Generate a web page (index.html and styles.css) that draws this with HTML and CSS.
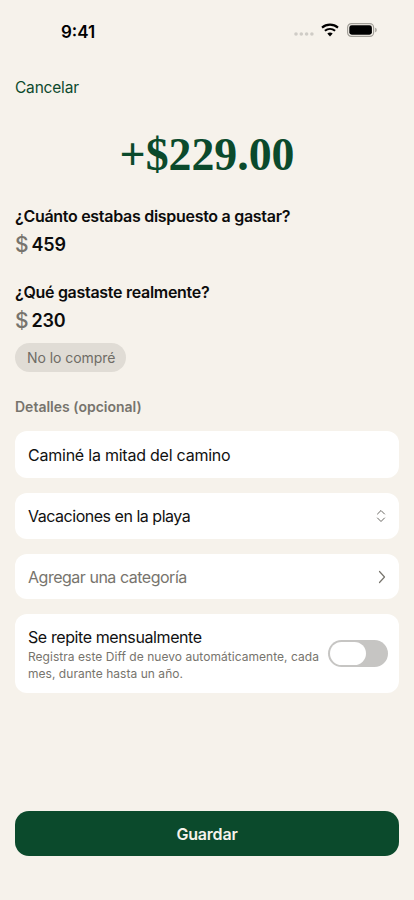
FILE: index.html
```html
<!DOCTYPE html>
<html lang="es">
<head>
<meta charset="utf-8">
<title>Diff</title>
<link rel="stylesheet" href="styles.css">
</head>
<body>
<div class="page">
  <header class="status">
    <span class="time">9:41</span>
    <div class="status-icons">
      <svg class="dots" width="20" height="4" viewBox="0 0 20 4"><g fill="#cfccc6"><circle cx="2" cy="2" r="1.8"/><circle cx="7.3" cy="2" r="1.8"/><circle cx="12.6" cy="2" r="1.8"/><circle cx="17.9" cy="2" r="1.8"/></g></svg>
      <svg class="wifi" width="18" height="14" viewBox="0 0 18 14"><g fill="none" stroke="#000" stroke-width="2.1"><path d="M1 4.6C5.6.6 12.4.6 17 4.6"/><path d="M3.9 7.8c3-2.500 7.200-2.500 10.200 0"/></g><path d="M6.300 10.500c1.600-1.200 3.800-1.200 5.400 0L9 13.600z" fill="#000"/></svg>
      <svg class="battery" width="30" height="14" viewBox="0 0 30 14"><rect x=".6" y=".6" width="26" height="12.8" rx="3.8" fill="none" stroke="#a29f98" stroke-width="1.2"/><rect x="2.3" y="2.3" width="22.6" height="9.4" rx="2.4" fill="#000"/><path d="M28.200 4.800c1 .3 1.500 1.100 1.500 2.200s-.5 1.900-1.500 2.200z" fill="#a29f98"/></svg>
    </div>
  </header>

  <main class="content">
    <a class="cancel">Cancelar</a>
    <h1 class="total">+$229.00</h1>

    <section class="question">
      <h2 class="q-label">¿Cuánto estabas dispuesto a gastar?</h2>
      <div class="amount"><span class="currency">$</span><span class="value">459</span></div>
    </section>

    <section class="question second">
      <h2 class="q-label">¿Qué gastaste realmente?</h2>
      <div class="amount"><span class="currency">$</span><span class="value">230</span></div>
      <span class="chip">No lo compré</span>
    </section>

    <h3 class="section-label">Detalles (opcional)</h3>

    <div class="cards">
      <div class="card tall"><span class="card-text first">Caminé la mitad del camino</span></div>
      <div class="card mid">
        <span class="card-text">Vacaciones en la playa</span>
        <svg class="updown" width="10" height="14" viewBox="0 0 10 14"><path d="M1.500 5 5 1.500 8.500 5M1.500 9 5 12.500 8.500 9" fill="none" stroke="#6a6863" stroke-width="1" stroke-linecap="round" stroke-linejoin="round"/></svg>
      </div>
      <div class="card low">
        <span class="card-text muted">Agregar una categoría</span>
        <svg class="chev" width="8" height="14" viewBox="0 0 8 14"><path d="M1.500 1.500 6.500 7 1.500 12.500" fill="none" stroke="#77746d" stroke-width="1.200" stroke-linecap="round" stroke-linejoin="round"/></svg>
      </div>
      <div class="card repeat">
        <div class="repeat-text">
          <div class="repeat-title">Se repite mensualmente</div>
          <div class="repeat-sub">Registra este Diff de nuevo automáticamente, cada mes, durante hasta un año.</div>
        </div>
        <div class="toggle"><span class="knob"></span></div>
      </div>
    </div>
  </main>

  <footer class="footer">
    <button class="save">Guardar</button>
  </footer>
</div>
</body>
</html>
```
FILE: styles.css
```css
* { box-sizing: border-box; }
html, body { margin: 0; padding: 0; }
body {
  background: #f6f2eb;
  font-family: Inter, "Liberation Sans", sans-serif;
  color: #0c0c0c;
}
.page {
  width: 414px;
  height: 900px;
  display: flex;
  flex-direction: column;
  overflow: hidden;
}
.status {
  height: 62px;
  flex: none;
  display: flex;
  justify-content: space-between;
  align-items: flex-start;
  padding: 21px 37px 0 61px;
}
.time { font-size: 17px; font-weight: 600; line-height: 22px; color: #000; }
.status-icons { display: flex; align-items: center; gap: 8px; height: 22px; margin-top: -2px; }
.dots { margin: 8px -1px 0 0; }
.content { flex: 1; padding: 0 15px; display: flex; flex-direction: column; }
.cancel { font-size: 15.500px; line-height: 20px; color: #0d4a2d; margin-top: 16px; letter-spacing: -.2px; }
.total {
  margin: 29px 0 0;
  font-family: "Liberation Serif", serif;
  font-weight: 700;
  font-size: 45.800px;
  line-height: 56px;
  text-align: center;
  color: #0b4a2c;
}
.question { margin-top: 23px; }
.question.second { margin-top: 24px; }
.q-label { margin: 0; font-size: 16px; line-height: 20px; font-weight: 600; color: #0c0c0c; letter-spacing: -.29px; }
.amount { display: flex; align-items: center; gap: 3px; margin-top: 4px; height: 28px; }
.currency { font-size: 21px; font-weight: 500; color: #77746d; }
.value { font-size: 18px; font-weight: 600; color: #0c0c0c; letter-spacing: -.2px; }
.chip {
  display: inline-flex;
  align-items: center;
  height: 29px;
  margin-top: 9px;
  padding: 0 11px 0 12px;
  border-radius: 15px;
  background: #e0dcd5;
  color: #6f6c65;
  font-size: 14px;
  letter-spacing: -.05px;
}
.section-label { margin: 26px 0 0; font-size: 14px; line-height: 18px; font-weight: 600; color: #77746d; }
.cards { display: flex; flex-direction: column; gap: 15px; margin-top: 15px; }
.card {
  background: #fff;
  border-radius: 12px;
  display: flex;
  align-items: center;
  justify-content: space-between;
  padding: 0 13px;
}
.tall { height: 47px; }
.mid { height: 46px; }
.low { height: 45px; }
.card-text { font-size: 16px; color: #111; letter-spacing: -.48px; }
.card-text.first { letter-spacing: -.23px; }
.muted { color: #77746d; }
.repeat { height: 79px; padding: 2px 11px 0 13px; gap: 8px; }
.repeat-title { font-size: 16px; line-height: 20px; color: #111; letter-spacing: -.4px; }
.repeat-sub { font-size: 12px; line-height: 17px; color: #77746d; margin-top: 1px; letter-spacing: .04px; }
.toggle {
  flex: none;
  width: 60px;
  height: 27px;
  margin-top: -2px;
  border-radius: 14px;
  background: #c6c5c3;
  padding: 2px;
}
.knob {
  display: block;
  width: 36px;
  height: 23px;
  border-radius: 12px;
  background: #fff;
}
.footer { flex: none; padding: 0 15px 44px; }
.save {
  width: 100%;
  height: 45px;
  border: 0;
  border-radius: 14px;
  background: #0b4a2c;
  color: #f6f2eb;
  font-family: Inter, "Liberation Sans", sans-serif;
  font-size: 16px;
  font-weight: 600;
  letter-spacing: -.2px;
}
```
